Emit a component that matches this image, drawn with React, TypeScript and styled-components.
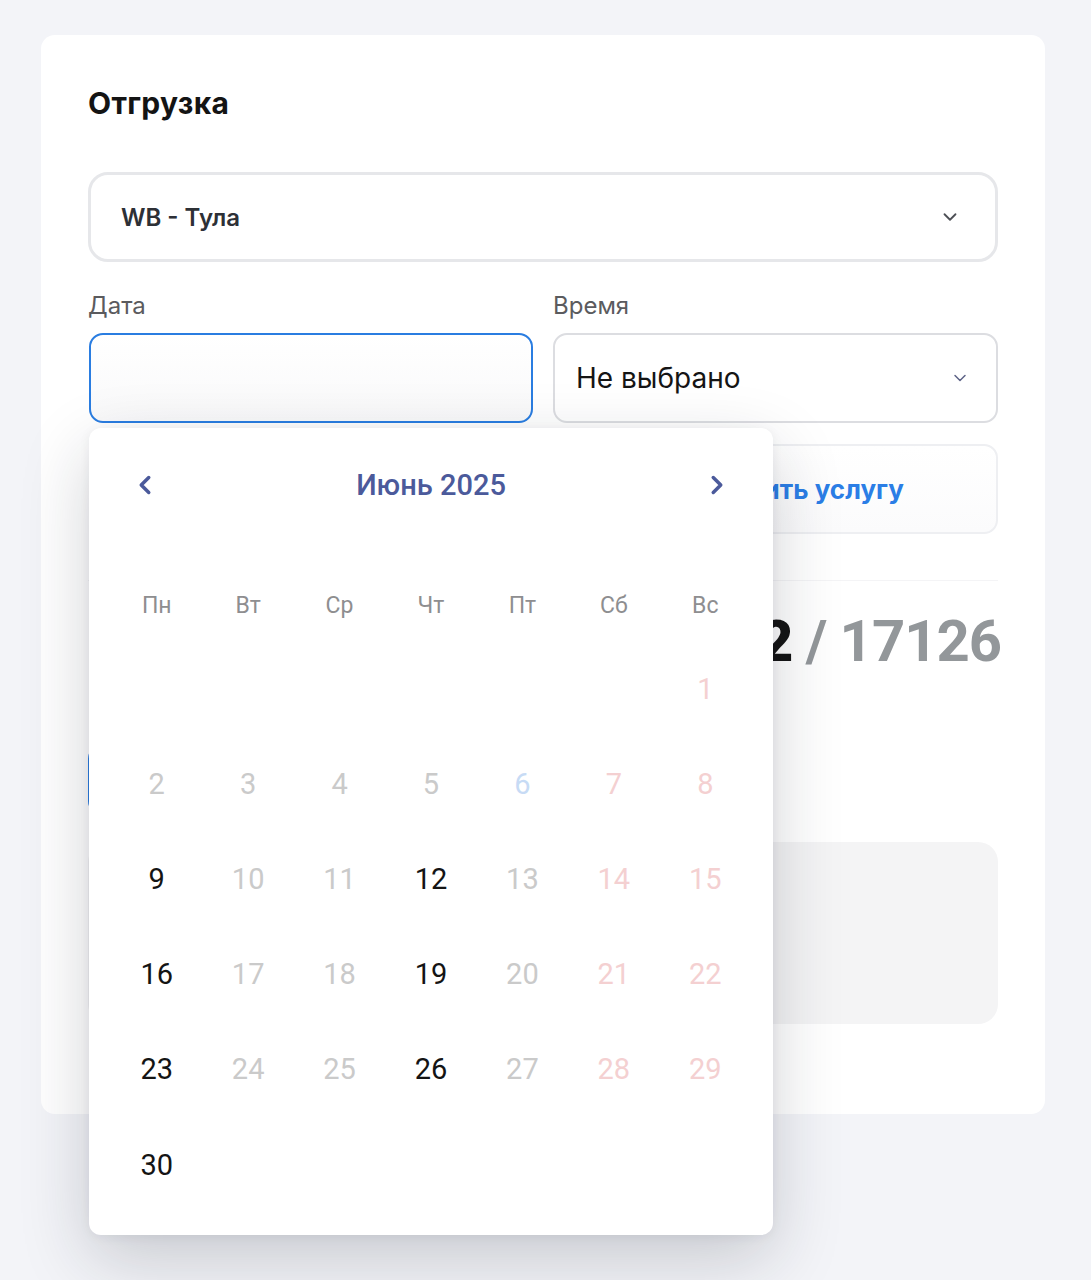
import React from 'react'
import styled, { createGlobalStyle } from 'styled-components'
import { ChevronDown, ChevronLeft, ChevronRight, Plus } from 'lucide-react'

const GlobalStyle = createGlobalStyle`
  html, body {
    margin: 0;
    padding: 0;
    background: #f3f4f8;
    font-family: Inter, 'Noto Sans', sans-serif;
  }
  * {
    box-sizing: border-box;
  }
`

const Page = styled.div`
  min-height: 1280px;
  padding: 35px 46px 0 41px;
`

const Card = styled.section`
  background: #ffffff;
  border-radius: 14px;
  padding: 47px 47px 90px;
  display: flex;
  flex-direction: column;
`

const Title = styled.h2`
  margin: 0;
  font-size: 30px;
  line-height: 42px;
  font-weight: 700;
  color: #141414;
  letter-spacing: 0.3px;
`

const WarehouseSelect = styled.div`
  margin-top: 48px;
  height: 90px;
  border: 3px solid #e6e7ea;
  border-radius: 20px;
  display: flex;
  align-items: center;
  justify-content: space-between;
  padding: 0 34px 0 30px;
  font-size: 24px;
  font-weight: 600;
  color: #2d3036;
`

const FieldsGrid = styled.div<{ $top: number }>`
  margin-top: ${({ $top }) => $top}px;
  display: grid;
  grid-template-columns: 1fr 1fr;
  column-gap: 20px;
`

const Field = styled.div`
  position: relative;
  display: flex;
  flex-direction: column;
`

const Label = styled.div`
  font-size: 24px;
  line-height: 30px;
  color: #5b5b5e;
  margin-bottom: 12px;
`

const DateInput = styled.div`
  height: 90px;
  border: 2px solid #2a7de1;
  border-radius: 14px;
  background: linear-gradient(#ffffff, #f9f9fa);
  margin-left: 1px;
`

const TimeSelect = styled.div`
  height: 90px;
  border: 2px solid #dcdde1;
  border-radius: 14px;
  display: flex;
  align-items: center;
  justify-content: space-between;
  padding: 0 26px 0 21px;
  font-size: 28px;
  color: #151515;
`

const OutlineButton = styled.button`
  height: 90px;
  border: 2px solid #eeeff2;
  border-radius: 14px;
  background: linear-gradient(#ffffff, #fbfbfc);
  display: flex;
  align-items: center;
  justify-content: center;
  gap: 8px;
  padding: 0;
  font-family: Inter, 'Noto Sans', sans-serif;
  font-size: 26px;
  font-weight: 700;
  color: #2b7ee6;
`

const Divider = styled.hr`
  margin: 46px 0 0;
  border: none;
  border-top: 1px solid #f4f4f6;
`

const StatsRow = styled.div`
  margin-top: 25px;
  height: 70px;
  display: flex;
  align-items: center;
  justify-content: flex-end;
`

const StatsValue = styled.span`
  font-family: Roboto, 'Liberation Sans', sans-serif;
  font-size: 58px;
  font-weight: 700;
  letter-spacing: -1px;
  color: #93979a;
  margin-right: -3px;

  b {
    color: #141414;
  }
`

const CommentBox = styled.div`
  margin-top: 69px;
  width: 440px;
  height: 70px;
  border: 2px solid #2a7de1;
  border-radius: 14px;
`

const InfoPanel = styled.div`
  margin-top: 27px;
  height: 182px;
  border-radius: 20px;
  background: #f4f4f5;
`

/* calendar popover */

const Popover = styled.div`
  position: absolute;
  top: calc(100% + 5px);
  left: 1px;
  width: 684px;
  height: 807px;
  background: #ffffff;
  border-radius: 12px;
  box-shadow: 0 24px 70px rgba(25, 30, 45, 0.2), 0 2px 12px rgba(25, 30, 45, 0.06);
  padding: 28px 22px 23px;
  font-family: Roboto, 'Liberation Sans', sans-serif;
  z-index: 10;
`

const CalendarHeader = styled.div`
  height: 58px;
  margin: 0 12px;
  display: flex;
  align-items: center;
  justify-content: space-between;
`

const NavButton = styled.button`
  width: 44px;
  height: 44px;
  border: none;
  background: none;
  padding: 0;
  display: flex;
  align-items: center;
  justify-content: center;
  color: #4b5a9b;
`

const MonthTitle = styled.div`
  font-size: 29px;
  font-weight: 500;
  color: #4b5a9b;
`

const WeekRow = styled.div`
  margin-top: 55px;
  height: 72px;
  display: grid;
  grid-template-columns: repeat(7, 1fr);
  align-items: center;
`

const WeekDay = styled.div`
  text-align: center;
  font-size: 23px;
  color: #8e8e90;
`

const DaysGrid = styled.div`
  display: grid;
  grid-template-columns: repeat(7, 1fr);
  grid-auto-rows: 95.2px;
  align-items: center;
`

type DayState = 'open' | 'off' | 'weekend' | 'today'

const dayColors: Record<DayState, string> = {
  open: '#141414',
  off: '#cacaca',
  weekend: '#f4d0d1',
  today: '#c7dbf5',
}

const Day = styled.div<{ $state: DayState }>`
  text-align: center;
  font-size: 29px;
  color: ${({ $state }) => dayColors[$state]};
`

const weekDays = ['Пн', 'Вт', 'Ср', 'Чт', 'Пт', 'Сб', 'Вс']
const openDays = [9, 12, 16, 19, 23, 26, 30]

// June 2025 starts on a Sunday
const leadingBlanks = 6

const dayState = (day: number): DayState => {
  if (openDays.includes(day)) return 'open'
  if (day === 6) return 'today'
  const weekday = (leadingBlanks + day - 1) % 7
  return weekday >= 5 ? 'weekend' : 'off'
}

const Calendar = () => (
  <Popover>
    <CalendarHeader>
      <NavButton>
        <ChevronLeft size={30} strokeWidth={2.8} />
      </NavButton>
      <MonthTitle>Июнь 2025</MonthTitle>
      <NavButton>
        <ChevronRight size={30} strokeWidth={2.8} />
      </NavButton>
    </CalendarHeader>
    <WeekRow>
      {weekDays.map((d) => (
        <WeekDay key={d}>{d}</WeekDay>
      ))}
    </WeekRow>
    <DaysGrid>
      {Array.from({ length: leadingBlanks }).map((_, i) => (
        <div key={`blank-${i}`} />
      ))}
      {Array.from({ length: 30 }, (_, i) => i + 1).map((day) => (
        <Day key={day} $state={dayState(day)}>
          {day}
        </Day>
      ))}
    </DaysGrid>
  </Popover>
)

export default function App() {
  return (
    <>
      <GlobalStyle />
      <Page>
        <Card>
          <Title>Отгрузка</Title>
          <WarehouseSelect>
            WB - Тула
            <ChevronDown size={22} strokeWidth={2} color="#4d4f55" />
          </WarehouseSelect>

          <FieldsGrid $top={29}>
            <Field>
              <Label>Дата</Label>
              <DateInput />
              <Calendar />
            </Field>
            <Field>
              <Label>Время</Label>
              <TimeSelect>
                Не выбрано
                <ChevronDown size={20} strokeWidth={1.8} color="#5d6387" />
              </TimeSelect>
            </Field>
          </FieldsGrid>

          <FieldsGrid $top={21}>
            <div />
            <OutlineButton>
              <Plus size={24} strokeWidth={2.5} />
              Добавить услугу
            </OutlineButton>
          </FieldsGrid>

          <Divider />
          <StatsRow>
            <StatsValue>
              <b>12</b> / 17126
            </StatsValue>
          </StatsRow>

          <CommentBox />
          <InfoPanel />
        </Card>
      </Page>
    </>
  )
}
